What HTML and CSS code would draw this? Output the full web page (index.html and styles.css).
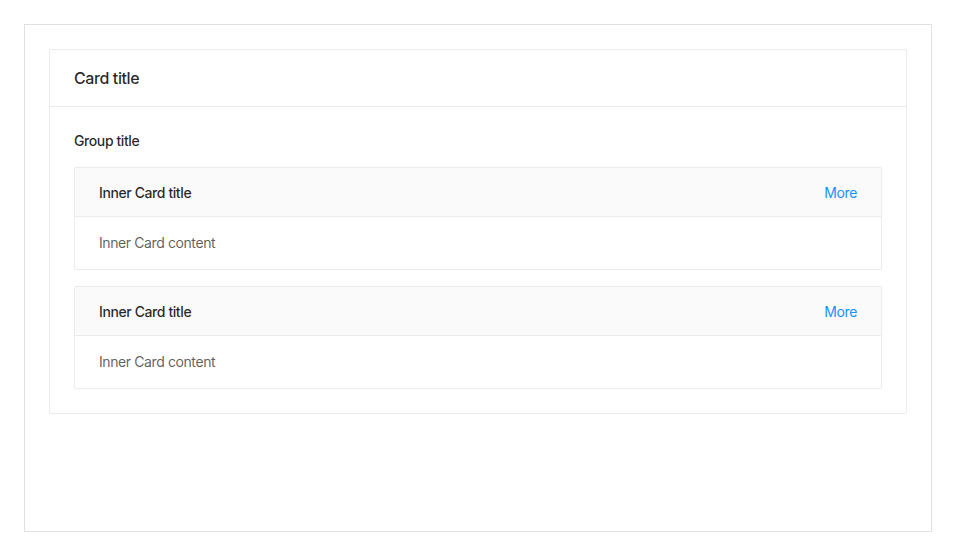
FILE: index.html
```html
<!DOCTYPE html>
<html>
<head>
<meta charset="utf-8">
<link rel="stylesheet" href="styles.css">
</head>
<body>
<div class="frame">
  <div class="card">
    <div class="card-head">Card title</div>
    <div class="card-body">
      <div class="group-title">Group title</div>
      <div class="inner-card">
        <div class="inner-head">
          <span class="inner-title">Inner Card title</span>
          <a class="more" href="#">More</a>
        </div>
        <div class="inner-body">Inner Card content</div>
      </div>
      <div class="inner-card">
        <div class="inner-head">
          <span class="inner-title">Inner Card title</span>
          <a class="more" href="#">More</a>
        </div>
        <div class="inner-body">Inner Card content</div>
      </div>
    </div>
  </div>
</div>
</body>
</html>
```
FILE: styles.css
```css
html, body {
  margin: 0;
  padding: 0;
  background: #fff;
}
body {
  padding: 24px;
  font-family: Inter, "Noto Sans", "Liberation Sans", sans-serif;
  font-size: 14px;
  letter-spacing: -0.4px;
  color: rgba(0,0,0,0.85);
  box-sizing: border-box;
}
.frame {
  border: 1px solid #e0e0e0;
  height: 508px;
  box-sizing: border-box;
  padding: 24px;
}
.card {
  border: 1px solid #ebebeb;
  border-radius: 2px;
}
.card-head {
  height: 56px;
  border-bottom: 1px solid #ebebeb;
  padding: 0 24px;
  display: flex;
  align-items: center;
  font-size: 16px;
  font-weight: 500;
  color: rgba(0,0,0,0.85);
}
.card-body {
  padding: 24px;
  display: flex;
  flex-direction: column;
}
.group-title {
  line-height: 20px;
  font-weight: 500;
  margin-bottom: 16px;
}
.inner-card {
  border: 1px solid #ebebeb;
  border-radius: 2px;
}
.inner-card + .inner-card {
  margin-top: 16px;
}
.inner-head {
  height: 48px;
  background: #fafafa;
  border-bottom: 1px solid #ebebeb;
  padding: 0 24px;
  display: flex;
  align-items: center;
  justify-content: space-between;
}
.inner-title {
  font-weight: 500;
  color: rgba(0,0,0,0.85);
}
.more {
  color: #1890ff;
  text-decoration: none;
}
.inner-body {
  padding: 15px 24px;
  line-height: 22px;
  color: rgba(0,0,0,0.65);
}
```
